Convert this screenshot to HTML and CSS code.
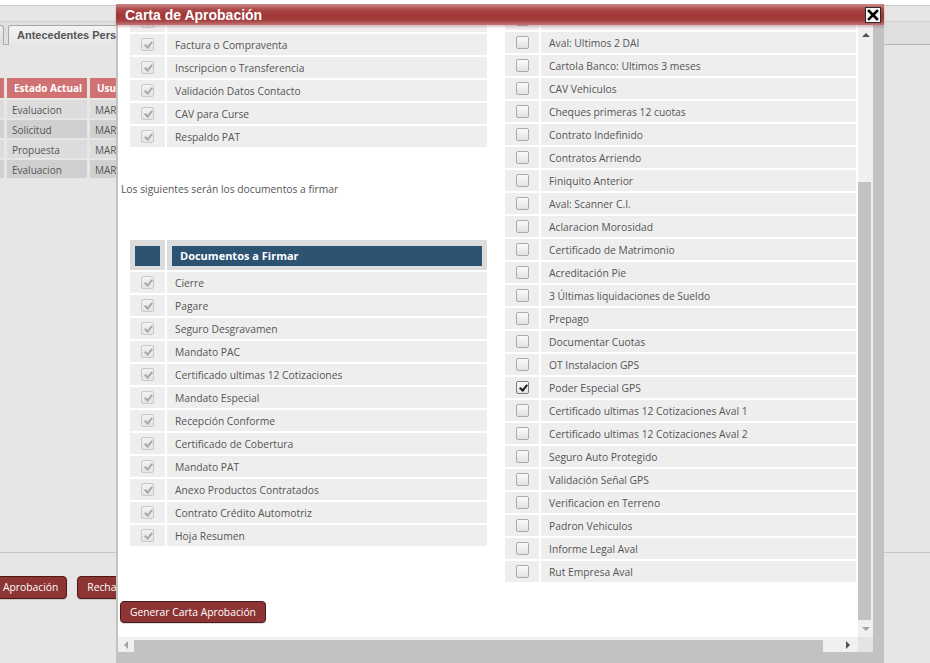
FILE: index.html
```html
<!DOCTYPE html>
<html lang="es">
<head>
<meta charset="utf-8">
<title>Carta de Aprobación</title>
<link rel="stylesheet" href="styles.css">
</head>
<body>
<div class="app">
  <div class="topstrip"></div>
  <div class="tabbar">
    <div class="tab tab-prev"></div>
    <div class="tab">Antecedentes Personales</div>
  </div>
  <div class="main">
    <table class="grid">
      <thead>
        <tr><th class="c0"></th><th class="c1">Estado Actual</th><th class="c2">Usuario</th></tr>
      </thead>
      <tbody>
        <tr><td></td><td>Evaluacion</td><td>MARCELO</td></tr>
        <tr class="alt"><td></td><td>Solicitud</td><td>MARCELO</td></tr>
        <tr><td></td><td>Propuesta</td><td>MARCELO</td></tr>
        <tr class="alt"><td></td><td>Evaluacion</td><td>MARCELO</td></tr>
      </tbody>
    </table>
  </div>
  <div class="actions">
    <button class="btn">Aprobación</button>
    <button class="btn">Rechazar</button>
  </div>
</div>

<div class="dialog">
  <div class="titlebar">
    <span class="title">Carta de Aprobación</span>
    <span class="close"><svg width="14" height="14" viewBox="0 0 14 14"><path d="M3 3 L11 11 M11 3 L3 11" stroke="#000" stroke-width="2.6" stroke-linecap="square"/></svg></span>
  </div>
  <div class="dlg-body">
    <div class="viewport">
      <div class="content">
        <div class="columns">
          <div class="col-left">
            <table class="docs docs-top">
              <tr><td class="cbc"><span class="cb dis"></span></td><td class="lbl"></td></tr>
              <tr><td class="cbc"><span class="cb dis"></span></td><td class="lbl">Factura o Compraventa</td></tr>
              <tr><td class="cbc"><span class="cb dis"></span></td><td class="lbl">Inscripcion o Transferencia</td></tr>
              <tr><td class="cbc"><span class="cb dis"></span></td><td class="lbl">Validación Datos Contacto</td></tr>
              <tr><td class="cbc"><span class="cb dis"></span></td><td class="lbl">CAV para Curse</td></tr>
              <tr><td class="cbc"><span class="cb dis"></span></td><td class="lbl">Respaldo PAT</td></tr>
            </table>
            <p class="note">Los siguientes serán los documentos a firmar</p>
            <table class="docs docs-sign">
              <tr><th class="hcb"><div class="hd"></div></th><th class="hlbl"><div class="hd">Documentos a Firmar</div></th></tr>
              <tr><td class="cbc"><span class="cb dis"></span></td><td class="lbl">Cierre</td></tr>
              <tr><td class="cbc"><span class="cb dis"></span></td><td class="lbl">Pagare</td></tr>
              <tr><td class="cbc"><span class="cb dis"></span></td><td class="lbl">Seguro Desgravamen</td></tr>
              <tr><td class="cbc"><span class="cb dis"></span></td><td class="lbl">Mandato PAC</td></tr>
              <tr><td class="cbc"><span class="cb dis"></span></td><td class="lbl">Certificado ultimas 12 Cotizaciones</td></tr>
              <tr><td class="cbc"><span class="cb dis"></span></td><td class="lbl">Mandato Especial</td></tr>
              <tr><td class="cbc"><span class="cb dis"></span></td><td class="lbl">Recepción Conforme</td></tr>
              <tr><td class="cbc"><span class="cb dis"></span></td><td class="lbl">Certificado de Cobertura</td></tr>
              <tr><td class="cbc"><span class="cb dis"></span></td><td class="lbl">Mandato PAT</td></tr>
              <tr><td class="cbc"><span class="cb dis"></span></td><td class="lbl">Anexo Productos Contratados</td></tr>
              <tr><td class="cbc"><span class="cb dis"></span></td><td class="lbl">Contrato Crédito Automotriz</td></tr>
              <tr><td class="cbc"><span class="cb dis"></span></td><td class="lbl">Hoja Resumen</td></tr>
            </table>
          </div>
          <div class="col-right">
            <table class="docs docs-right">
              <tr><td class="cbc"><span class="cb"></span></td><td class="lbl"></td></tr>
              <tr><td class="cbc"><span class="cb"></span></td><td class="lbl">Aval: Ultimos 2 DAI</td></tr>
              <tr><td class="cbc"><span class="cb"></span></td><td class="lbl">Cartola Banco: Ultimos 3 meses</td></tr>
              <tr><td class="cbc"><span class="cb"></span></td><td class="lbl">CAV Vehiculos</td></tr>
              <tr><td class="cbc"><span class="cb"></span></td><td class="lbl">Cheques primeras 12 cuotas</td></tr>
              <tr><td class="cbc"><span class="cb"></span></td><td class="lbl">Contrato Indefinido</td></tr>
              <tr><td class="cbc"><span class="cb"></span></td><td class="lbl">Contratos Arriendo</td></tr>
              <tr><td class="cbc"><span class="cb"></span></td><td class="lbl">Finiquito Anterior</td></tr>
              <tr><td class="cbc"><span class="cb"></span></td><td class="lbl">Aval: Scanner C.I.</td></tr>
              <tr><td class="cbc"><span class="cb"></span></td><td class="lbl">Aclaracion Morosidad</td></tr>
              <tr><td class="cbc"><span class="cb"></span></td><td class="lbl">Certificado de Matrimonio</td></tr>
              <tr><td class="cbc"><span class="cb"></span></td><td class="lbl">Acreditación Pie</td></tr>
              <tr><td class="cbc"><span class="cb"></span></td><td class="lbl">3 Últimas liquidaciones de Sueldo</td></tr>
              <tr><td class="cbc"><span class="cb"></span></td><td class="lbl">Prepago</td></tr>
              <tr><td class="cbc"><span class="cb"></span></td><td class="lbl">Documentar Cuotas</td></tr>
              <tr><td class="cbc"><span class="cb"></span></td><td class="lbl">OT Instalacion GPS</td></tr>
              <tr><td class="cbc"><span class="cb on"></span></td><td class="lbl">Poder Especial GPS</td></tr>
              <tr><td class="cbc"><span class="cb"></span></td><td class="lbl">Certificado ultimas 12 Cotizaciones Aval 1</td></tr>
              <tr><td class="cbc"><span class="cb"></span></td><td class="lbl">Certificado ultimas 12 Cotizaciones Aval 2</td></tr>
              <tr><td class="cbc"><span class="cb"></span></td><td class="lbl">Seguro Auto Protegido</td></tr>
              <tr><td class="cbc"><span class="cb"></span></td><td class="lbl">Validación Señal GPS</td></tr>
              <tr><td class="cbc"><span class="cb"></span></td><td class="lbl">Verificacion en Terreno</td></tr>
              <tr><td class="cbc"><span class="cb"></span></td><td class="lbl">Padron Vehiculos</td></tr>
              <tr><td class="cbc"><span class="cb"></span></td><td class="lbl">Informe Legal Aval</td></tr>
              <tr><td class="cbc"><span class="cb"></span></td><td class="lbl">Rut Empresa Aval</td></tr>
            </table>
          </div>
        </div>
        <div class="footer">
          <button class="btn">Generar Carta Aprobación</button>
        </div>
      </div>
    </div>
    <div class="vscroll">
      <div class="sbtn sbtn-up"><span class="arr arr-up"></span></div>
      <div class="vtrack"><div class="vthumb"></div></div>
      <div class="sbtn sbtn-down"><span class="arr arr-down"></span></div>
    </div>
    <div class="hscroll">
      <div class="sbtn sbtn-left"><span class="arr arr-left"></span></div>
      <div class="hthumb"></div>
      <div class="sbtn sbtn-right"><span class="arr arr-right"></span></div>
    </div>
    <div class="corner"></div>
  </div>
</div>
</body>
</html>
```

FILE: styles.css
```css
* { box-sizing: border-box; }
html, body { margin: 0; padding: 0; }
body {
  width: 930px;
  height: 663px;
  overflow: hidden;
  position: relative;
  background: #e6e6e6;
  font-family: "Open Sans", "Noto Sans", sans-serif;
  font-size: 10.3px;
  color: #555;
}

/* ---------- background application ---------- */
.app { display: flex; flex-direction: column; }
.topstrip { height: 6px; background: #fff; border-bottom: 1px solid #cdcdcd; }
.tabbar {
  margin-top: 15px;
  height: 24px;
  border-top: 1px solid #d2d2d2;
  border-bottom: 1px solid #b5b5b5;
  background: #dfdfdf;
  display: flex;
  align-items: flex-end;
  gap: 4px;
}
.tab {
  height: 20px;
  margin-bottom: -1px;
  border: 1px solid #a8a8a8;
  border-bottom: none;
  border-radius: 3px 3px 0 0;
  background: linear-gradient(#f4f4f4, #e6e6e6);
  font-family: "Liberation Sans", Arial, sans-serif;
  font-weight: bold;
  font-size: 11px;
  color: #555;
  padding: 3px 0 0 8px;
  white-space: nowrap;
  width: 160px;
}
.tab-prev { width: 10px; margin-left: -6px; padding: 0; background: linear-gradient(#ececec, #dcdcdc); }

.main { height: 508px; border-bottom: 1px solid #c6c6c6; padding-top: 31px; }
.grid { margin-left: -40px; border-collapse: separate; border-spacing: 3px 2px; font-size: 10px; }
.grid th {
  height: 20px;
  background: #d17272;
  color: #fff;
  font-weight: bold;
  text-align: left;
  padding: 0 0 0 7px;
  white-space: nowrap;
}
.grid .c0 { width: 41px; }
.grid .c1 { width: 80px; }
.grid .c2 { width: 100px; }
.grid td { height: 18px; padding: 1px 0 0 5px; background: #dcdcdc; white-space: nowrap; }
.grid tr.alt td { background: #d0d0d0; }

.actions { display: flex; gap: 10px; margin-top: 23px; margin-left: -7px; }

.btn {
  height: 23px;
  padding: 0 8px 1px 9px;
  background: #8d3535;
  border: 1px solid #4e1818;
  border-radius: 4px;
  color: #fff;
  font-family: "Open Sans", "Noto Sans", sans-serif;
  font-size: 10.3px;
  white-space: nowrap;
  box-shadow: 0 1px 1px rgba(0,0,0,.15);
}

/* ---------- dialog ---------- */
.dialog {
  position: absolute;
  left: 116px;
  top: 4px;
  width: 768px;
  height: 659px;
  background: #c2c2c2;
  display: flex;
  flex-direction: column;
}
.titlebar {
  height: 21px;
  flex: none;
  display: flex;
  align-items: center;
  padding-left: 9px;
  background: linear-gradient(#cc8a8a 0%, #ad4a4a 25%, #9f3636 55%, #a64242 80%, #c27676 100%);
  box-shadow: 0 2px 2px rgba(170, 90, 90, .35);
  position: relative;
  z-index: 1;
}
.title {
  font-family: "Liberation Sans", Arial, sans-serif;
  font-weight: bold;
  font-size: 14px;
  color: #fff;
}
.close {
  margin-left: auto;
  margin-right: 3px;
  width: 16px;
  height: 16px;
  border: 1px solid #2a2a2a;
  background: #f6f6f6;
  display: flex;
  align-items: center;
  justify-content: center;
}

.dlg-body {
  flex: 1;
  display: grid;
  grid-template-columns: 740px 15px;
  grid-template-rows: 612px 15px;
  padding: 0 11px 11px 2px;
}
.viewport { background: #fff; overflow: hidden; }
.content { margin-top: -18px; padding-left: 3px; width: 780px; }
.columns { display: flex; align-items: flex-start; }
.col-left { width: 368px; flex: none; }
.col-right { margin-left: 14px; flex: none; }

.docs { border-collapse: separate; border-spacing: 2px; }
.docs-top { margin-left: 7px; margin-top: 2px; }
.docs-sign { margin-left: 7px; margin-top: 42px; }
.docs td { height: 21px; padding: 0; background: #eeeeee; }
.docs-top .cbc, .docs-sign .cbc { width: 35px; }
.docs-top .lbl, .docs-sign .lbl { width: 320px; }
.docs-right .cbc { width: 34px; }
.docs-right .lbl { width: 315px; }
.cbc { text-align: center; vertical-align: middle; line-height: 0; }
.lbl { padding-left: 8px !important; white-space: nowrap; color: #555; }

.docs th { background: #dcdcdc; padding: 6px 5px 4px 5px; height: 30px; }
.hd {
  height: 20px;
  background: #2d5373;
  color: #fff;
  font-weight: bold;
  font-size: 11px;
  text-align: left;
  padding-left: 8px;
  line-height: 20px;
}

.note { margin: 33px 0 0 0; line-height: 14px; }

.cb {
  display: inline-block;
  position: relative;
  width: 13px;
  height: 13px;
  border: 1px solid #aaaaaa;
  border-radius: 2px;
  background: linear-gradient(#fbfbfb, #e2e2e2);
  vertical-align: middle;
}
.cb.dis { border-color: #c9c9c9; background: linear-gradient(#f2f2f2, #e4e4e4); }
.cb.dis::after, .cb.on::after {
  content: "";
  position: absolute;
  left: 4px;
  top: 1px;
  width: 3px;
  height: 6px;
  border: solid #a8a8a8;
  border-width: 0 2px 2px 0;
  transform: rotate(40deg);
}
.cb.on { border-color: #7d7d7d; }
.cb.on::after { border-color: #1c1c1c; }

.footer { margin-top: 17px; padding-bottom: 40px; }
.footer .btn { margin-left: -1px; height: 22px; padding: 0 9px; }

/* ---------- scrollbars ---------- */
.vscroll { background: #f0f0f0; display: flex; flex-direction: column; }
.sbtn { display: flex; align-items: center; justify-content: center; flex: none; }
.sbtn-up { height: 20px; }
.sbtn-down { height: 17px; }
.vtrack { flex: 1; }
.vthumb { margin-top: 137px; width: 13px; height: 438px; background: #c2c2c2; }

.hscroll { background: #f0f0f0; display: flex; align-items: center; }
.sbtn-left { width: 15px; height: 15px; }
.sbtn-right { width: 20px; height: 15px; margin-left: auto; }
.hthumb { margin-left: 1px; width: 689px; height: 12px; margin-top: 2px; background: #c2c2c2; }
.corner { background: #e4e4e4; }

.arr { width: 0; height: 0; border: 4px solid transparent; }
.arr-up { border-top: none; border-bottom: 4px solid #505050; }
.arr-down { border-bottom: none; border-top: 4px solid #a3a3a3; }
.arr-left { border-left: none; border-right: 4px solid #a3a3a3; }
.arr-right { border-right: none; border-left: 4px solid #505050; }
```
